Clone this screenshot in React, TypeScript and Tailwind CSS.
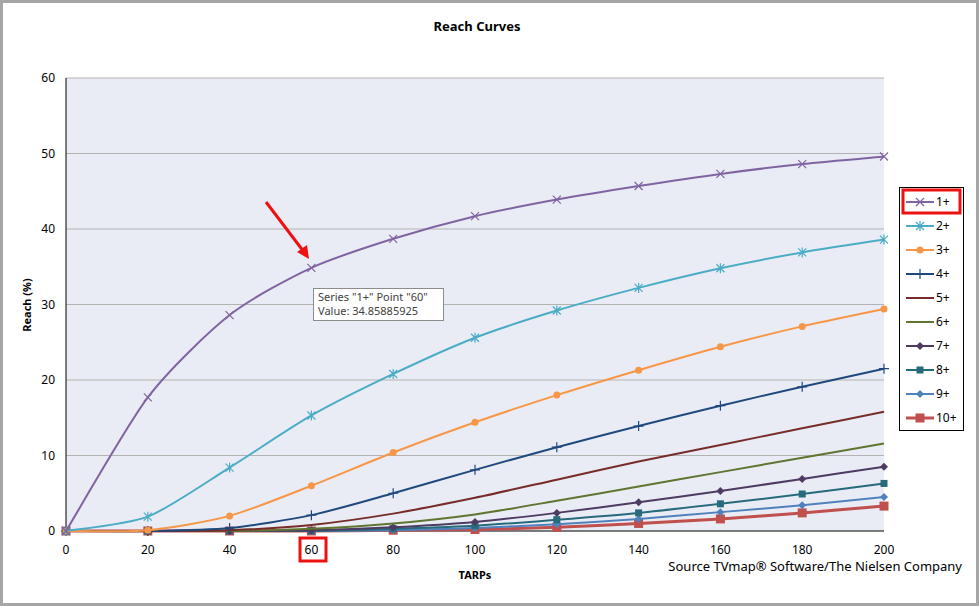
import React from "react";

type Series = { name: string; color: string; marker: string; data: number[]; width?: number };

const series: Series[] = [
  { name: "1+", color: "#8064a2", marker: "x", data: [0, 17.7, 28.6, 34.86, 38.7, 41.7, 43.9, 45.7, 47.3, 48.6, 49.6] },
  { name: "2+", color: "#4bacc6", marker: "star", data: [0, 1.9, 8.4, 15.3, 20.8, 25.6, 29.2, 32.2, 34.8, 36.9, 38.6] },
  { name: "3+", color: "#f79646", marker: "circle", data: [0, 0.1, 2.0, 6.0, 10.4, 14.4, 18.0, 21.3, 24.4, 27.1, 29.4] },
  { name: "4+", color: "#1f497d", marker: "plus", data: [0, 0, 0.4, 2.1, 5.0, 8.1, 11.1, 13.9, 16.6, 19.1, 21.5] },
  { name: "5+", color: "#772c2a", marker: "dash", data: [0, 0, 0.1, 0.8, 2.3, 4.4, 6.8, 9.2, 11.4, 13.6, 15.8] },
  { name: "6+", color: "#5f7530", marker: "dash", data: [0, 0, 0, 0.3, 1.0, 2.2, 4.0, 5.9, 7.8, 9.7, 11.6] },
  { name: "7+", color: "#4d3b62", marker: "diamond", data: [0, 0, 0, 0.1, 0.5, 1.2, 2.4, 3.8, 5.3, 6.9, 8.5] },
  { name: "8+", color: "#276a7c", marker: "square", data: [0, 0, 0, 0, 0.3, 0.7, 1.5, 2.4, 3.6, 4.9, 6.3] },
  { name: "9+", color: "#4f81bd", marker: "diamond", data: [0, 0, 0, 0, 0.1, 0.4, 0.9, 1.6, 2.5, 3.4, 4.5] },
  { name: "10+", color: "#c0504d", marker: "bigsquare", width: 3, data: [0, 0, 0, 0, 0.1, 0.2, 0.5, 1.0, 1.6, 2.4, 3.3] },
];

const X0 = 66, X1 = 884, Y0 = 531, Y60 = 78;
const px = (t: number) => X0 + (t / 200) * (X1 - X0);
const py = (v: number) => Y0 - (v / 60) * (Y0 - Y60);

// catmull-rom -> bezier, a bit less tension than default so it doesn't overshoot
function smooth(pts: [number, number][]) {
  let d = `M${pts[0][0]},${pts[0][1]}`;
  for (let i = 0; i < pts.length - 1; i++) {
    const p0 = pts[i - 1] || pts[i], p1 = pts[i], p2 = pts[i + 1], p3 = pts[i + 2] || p2;
    const c1 = [p1[0] + (p2[0] - p0[0]) / 8, p1[1] + (p2[1] - p0[1]) / 8];
    const c2 = [p2[0] - (p3[0] - p1[0]) / 8, p2[1] - (p3[1] - p1[1]) / 8];
    d += ` C${c1[0]},${c1[1]} ${c2[0]},${c2[1]} ${p2[0]},${p2[1]}`;
  }
  return d;
}

function Marker({ kind, x, y, c }: { kind: string; x: number; y: number; c: string }) {
  switch (kind) {
    case "x":
      return <path d={`M${x - 4},${y - 4}L${x + 4},${y + 4}M${x + 4},${y - 4}L${x - 4},${y + 4}`} stroke={c} strokeWidth={1.2} />;
    case "star":
      return <path d={`M${x - 4},${y - 4}L${x + 4},${y + 4}M${x + 4},${y - 4}L${x - 4},${y + 4}M${x},${y - 5}L${x},${y + 5}`} stroke={c} strokeWidth={1.2} />;
    case "circle":
      return <circle cx={x} cy={y} r={3.5} fill={c} />;
    case "plus":
      return <path d={`M${x - 5},${y}L${x + 5},${y}M${x},${y - 5}L${x},${y + 5}`} stroke={c} strokeWidth={1.2} />;
    case "diamond":
      return <path d={`M${x},${y - 4}L${x + 4},${y}L${x},${y + 4}L${x - 4},${y}Z`} fill={c} />;
    case "square":
      return <rect x={x - 3.5} y={y - 3.5} width={7} height={7} fill={c} />;
    case "bigsquare":
      return <rect x={x - 4.5} y={y - 4.5} width={9} height={9} fill={c} />;
    default:
      return null;
  }
}

export default function App() {
  return (
    <div className="w-[979px] h-[606px] bg-white border-[3px] border-[#a6a6a6] box-border overflow-hidden font-['Open_Sans','Liberation_Sans',sans-serif]">
      <svg width={973} height={600} viewBox="3 3 973 600">
        <text x={477} y={31} textAnchor="middle" fontSize={13} fontWeight={700}>Reach Curves</text>
        <rect x={X0} y={Y60} width={X1 - X0} height={Y0 - Y60} fill="#e9ecf4" />
        {[10, 20, 30, 40, 50, 60].map((v) => (
          <line key={v} x1={X0} x2={X1} y1={py(v)} y2={py(v)} stroke="#b3b3b3" />
        ))}
        <line x1={X0} x2={X0} y1={Y60} y2={Y0} stroke="#000" />
        <line x1={X0} x2={X1} y1={Y0} y2={Y0} stroke="#000" />
        {[0, 10, 20, 30, 40, 50, 60].map((v) => (
          <text key={v} x={55} y={py(v) + 4} textAnchor="end" fontSize={12}>{v}</text>
        ))}
        {[0, 20, 40, 60, 80, 100, 120, 140, 160, 180, 200].map((t) => (
          <text key={t} x={px(t)} y={554} textAnchor="middle" fontSize={12}>{t}</text>
        ))}
        <text x={31} y={305} textAnchor="middle" fontSize={11} fontWeight={700} transform="rotate(-90 31 305)">Reach (%)</text>
        <text x={475} y={579} textAnchor="middle" fontSize={11} fontWeight={700}>TARPs</text>
        <text x={962} y={571} textAnchor="end" fontSize={13}>Source TVmap® Software/The Nielsen Company</text>
        {[...series].reverse().map((s) => {
          const pts = s.data.map((v, i) => [px(i * 20), py(v)] as [number, number]);
          return (
            <g key={s.name}>
              <path d={smooth(pts)} fill="none" stroke={s.color} strokeWidth={s.width ?? 2} />
              {pts.map(([x, y], i) => (
                <Marker key={i} kind={s.marker} x={x} y={y} c={s.color} />
              ))}
            </g>
          );
        })}
        <rect x={313.5} y={288.5} width={130} height={32} fill="#fff" stroke="#8c8c8c" />
        <text x={318} y={301} fontSize={11} fill="#404040">Series "1+" Point "60"</text>
        <text x={318} y={315} fontSize={11} fill="#404040">Value: 34.85885925</text>
        <path d="M266,202L304,252" stroke="#ee1111" strokeWidth={3} />
        <path d="M309,259L297,252L307,245Z" fill="#ee1111" />
        <rect x={300} y={538} width={26} height={23} fill="none" stroke="#ee1111" strokeWidth={3} />
        <rect x={899.5} y={187.5} width={64} height={243} fill="#fff" stroke="#000" />
        {series.map((s, i) => {
          const y = 202 + i * 24;
          return (
            <g key={s.name}>
              <line x1={906} x2={934} y1={y} y2={y} stroke={s.color} strokeWidth={s.width ?? 2} />
              <Marker kind={s.marker} x={920} y={y} c={s.color} />
              <text x={936} y={y + 4} fontSize={12}>{s.name}</text>
            </g>
          );
        })}
        <rect x={903} y={190} width={57} height={23} fill="none" stroke="#ee1111" strokeWidth={3} />
      </svg>
    </div>
  );
}
